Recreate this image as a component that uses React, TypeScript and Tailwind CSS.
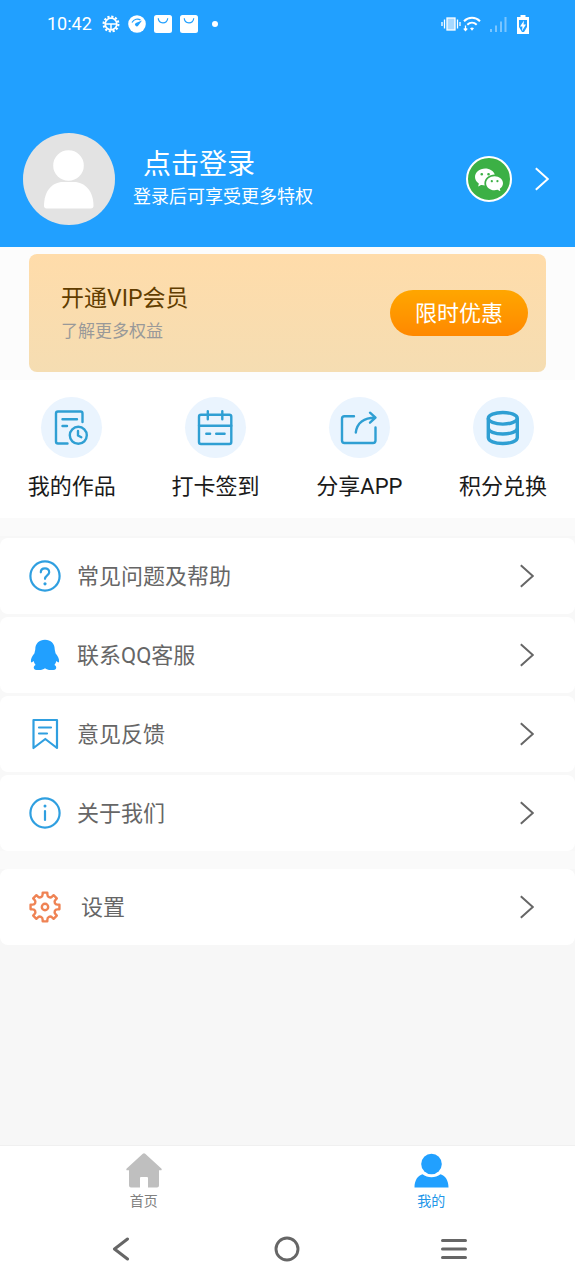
import type { ReactNode } from "react";
import { BsWechat } from "react-icons/bs";

const WorksIcon = () => (
  <svg viewBox="0 0 61 61" className="h-full w-full" fill="none" stroke="#2f9fd3" strokeWidth="2.4" strokeLinecap="round" strokeLinejoin="round">
    <path d="M41.500 25V16.500a2 2 0 0 0-2-2H17a2 2 0 0 0-2 2V44.500a2 2 0 0 0 2 2h9.500M21.500 22.300h14.500M21.500 29h4.500" />
    <circle cx="37.300" cy="38.300" r="8.500" />
    <path d="M37 34v4.500l3.300 1.700" />
  </svg>
);

const CalendarIcon = () => (
  <svg viewBox="0 0 61 61" className="h-full w-full" fill="none" stroke="#2f9fd3" strokeWidth="2.4" strokeLinecap="round" strokeLinejoin="round">
    <rect x="14" y="17.700" width="32.300" height="29.300" rx="2" />
    <path d="M14 28.700h32.300M22.800 14.300v8M37.300 14.300v8M21.300 36.700h3.800M31.200 36.700h8.400" />
  </svg>
);

const ShareIcon = () => (
  <svg viewBox="0 0 61 61" className="h-full w-full" fill="none" stroke="#2f9fd3" strokeWidth="2.4" strokeLinecap="round" strokeLinejoin="round">
    <path d="M25 19.300H15.500a2.500 2.500 0 0 0-2.500 2.500V43.500a2.500 2.500 0 0 0 2.500 2.500H44a2.500 2.500 0 0 0 2.500-2.500V30.500" />
    <path d="M26.800 35.500C28 26 35 20.700 46 20.700M41 15.700l5.500 5-5.500 5" />
  </svg>
);

const CoinsIcon = () => (
  <svg viewBox="0 0 61 61" className="h-full w-full" fill="none" stroke="#2f9fd3" strokeWidth="3.4">
    <ellipse cx="29.800" cy="21.300" rx="14.500" ry="5.800" />
    <path d="M15.300 21.300V40.500c0 3.600 6.500 6 14.500 6s14.500-2.400 14.500-6V21.300M15.300 31c0 3.600 6.500 6 14.500 6s14.500-2.400 14.500-6" />
  </svg>
);

const HelpIcon = () => (
  <svg viewBox="0 0 32 32" className="h-8 w-8" fill="none" stroke="#2f9fe0" strokeWidth="2.2" strokeLinecap="round">
    <circle cx="16" cy="16" r="14.600" />
    <path d="M11.800 12.300c0-2.400 1.800-4 4.200-4s4.200 1.600 4.200 3.900c0 3-4.200 3.200-4.200 6.600" />
    <circle cx="16" cy="23.800" r="1.600" fill="#2f9fe0" stroke="none" />
  </svg>
);

const PenguinIcon = () => (
  <svg viewBox="0 0 32 32" className="h-8 w-8" fill="#21a0ff">
    <path d="M16 .7C10.300.7 6.300 4.600 6.300 10c0 1.500-.6 2.500-.8 4.300C3.300 17 1.800 19.800 1.900 22.300c.1 1.600 1 1.500 2.700-.3.300 1.500 1 2.700 2 3.900-1.300.7-2 1.800-1.800 3 .2 1.700 2.300 2.300 5.400 2.200 2.600-.1 4.300-.7 5.800-1.800 1.500 1.100 3.200 1.700 5.800 1.800 3.100.1 5.200-.5 5.400-2.200.2-1.200-.5-2.300-1.800-3 1-1.200 1.700-2.400 2-3.900 1.700 1.800 2.600 1.900 2.700.3.100-2.500-1.400-5.300-3.600-8-.2-1.800-.8-2.800-.8-4.300C25.700 4.600 21.700.7 16 .7z" />
  </svg>
);

const FeedbackIcon = () => (
  <svg viewBox="0 0 32 32" className="h-8 w-8" fill="none" stroke="#2f9fe0" strokeWidth="2.2" strokeLinecap="round" strokeLinejoin="round">
    <path d="M4.500 2h23.500v28l-11.700-9-11.800 9zM10 9.500h12M10 15.500h8" />
  </svg>
);

const InfoIcon = () => (
  <svg viewBox="0 0 32 32" className="h-8 w-8" fill="none" stroke="#2f9fe0" strokeWidth="2.2" strokeLinecap="round">
    <circle cx="16" cy="16" r="14.600" />
    <path d="M16 14v9" />
    <circle cx="16" cy="9" r="1.500" fill="#2f9fe0" stroke="none" />
  </svg>
);

// eight teeth with a round valley between each pair
const gearPoint = (radius: number, deg: number) => {
  const a = (deg * Math.PI) / 180;
  return `${(16 + radius * Math.cos(a)).toFixed(2)} ${(16 + radius * Math.sin(a)).toFixed(2)}`;
};

const gearPath =
  [0, 45, 90, 135, 180, 225, 270, 315]
    .map(
      (deg, i) =>
        `${i === 0 ? "M" : "L"}${gearPoint(14.6, deg - 9)}L${gearPoint(14.6, deg + 9)}L${gearPoint(12.6, deg + 11)}A2.700 2.700 0 0 0 ${gearPoint(12.6, deg + 34)}`
    )
    .join("") + "Z";

const GearIcon = () => (
  <svg viewBox="0 0 32 32" className="h-8 w-8" fill="none" stroke="#ef8354" strokeWidth="2.4" strokeLinejoin="round">
    <path d={gearPath} />
    <circle cx="16" cy="16" r="3.200" />
  </svg>
);

const Chevron = () => (
  <svg viewBox="0 0 14 24" className="h-6 w-3.5 shrink-0" fill="none" stroke="currentColor" strokeWidth="2">
    <path d="M.8 1.300 12.800 12 .8 22.700" />
  </svg>
);

const shortcuts = [
  { name: "我的作品", icon: <WorksIcon /> },
  { name: "打卡签到", icon: <CalendarIcon /> },
  { name: "分享APP", icon: <ShareIcon /> },
  { name: "积分兑换", icon: <CoinsIcon /> },
];

const menuItems = [
  { name: "常见问题及帮助", icon: <HelpIcon /> },
  { name: "联系QQ客服", icon: <PenguinIcon /> },
  { name: "意见反馈", icon: <FeedbackIcon /> },
  { name: "关于我们", icon: <InfoIcon /> },
];

const StatusBar = () => (
  <div className="flex h-12 items-center justify-between pr-[46px] pl-[47px] text-white">
    <div className="flex items-center gap-2">
      <span className="mr-0.5 text-lg">10:42</span>
      <svg viewBox="0 0 18 18" className="h-[18px] w-[18px]" fill="none" stroke="currentColor">
        <circle cx="9" cy="9" r="7.400" strokeWidth="2.200" strokeDasharray="2.200 1.675" />
        <circle cx="9" cy="9" r="5.800" strokeWidth="1.700" />
        <path d="M3.500 9h11M9 9v5.500" strokeWidth="1.500" />
      </svg>
      <svg viewBox="0 0 18 18" className="h-[18px] w-[18px]">
        <circle cx="9" cy="9" r="8.800" fill="currentColor" />
        <path d="M4 7.500C6 4 10 3.200 12.500 5" fill="none" stroke="#21a0ff" strokeWidth="1.200" />
        <path d="M14 5.500 10.300 10.500A1.800 1.800 0 1 1 7.800 8z" fill="#21a0ff" />
      </svg>
      {[1, 2].map((n) => (
        <svg key={n} viewBox="0 0 18 18" className="h-[18px] w-[18px]">
          <rect width="18" height="18" rx="2.500" fill="currentColor" />
          <path d="M4.300 3.300c0 6 9.400 6 9.400 0" fill="none" stroke="#21a0ff" strokeWidth="1.200" />
        </svg>
      ))}
      <span className="ml-1.5 h-1.5 w-1.5 rounded-full bg-white" />
    </div>
    <div className="flex items-center">
      <svg viewBox="0 0 20 14" className="h-3.5 w-5" fill="none" stroke="currentColor" strokeWidth="1.300">
        <rect x="6" y="1" width="8" height="12" fill="#a6d8ff" />
        <path d="M3.500 2.500v9M1 5v4M16.500 2.500v9M19 5v4" />
      </svg>
      <svg viewBox="0 0 18 16" className="ml-0.5 h-4 w-[18px]" fill="none" stroke="currentColor" strokeWidth="2">
        <path d="M1 5.300C5.500.7 12.500.7 17 5.300M4.300 8.800c2.800-2.700 6.600-2.700 9.400 0" />
        <path d="M7 12.300c1.300-1 2.700-1 4 0L9 14.800z" fill="currentColor" stroke="none" />
        <path d="M2.500 9.500v5M.8 12.500l1.700 2 1.700-2" strokeWidth="1.300" />
      </svg>
      <svg viewBox="0 0 18 16" className="ml-2 h-4 w-[18px]" fill="#7ac5ff">
        <path d="M1 13h2v3H1zM6 9.500h2V16H6zM11 5.500h2V16h-2zM15.500 1h2v15h-2z" />
      </svg>
      <svg viewBox="0 0 12 19" className="ml-2.5 h-[19px] w-3">
        <path d="M3.500 0h5v2H12v17H0V2h3.500z" fill="currentColor" />
        <path d="M2 5h8v7l-3 5H5l-3-5z" fill="#21a0ff" />
        <path d="M7 5.500 3 11.500h2.500l-.5 4.500 4-6.500H6.500z" fill="currentColor" />
      </svg>
    </div>
  </div>
);

const MenuRow = ({ name, icon, wide = false }: { name: string; icon: ReactNode; wide?: boolean }) => (
  <button
    className={`flex h-[76px] w-full cursor-pointer items-center rounded-lg bg-white pr-[41px] pl-[29px] text-[#666] ${
      wide ? "gap-5" : "gap-4"
    }`}
  >
    {icon}
    <span className="flex-1 pt-0.5 text-left text-[22px] leading-8">{name}</span>
    <Chevron />
  </button>
);

const App = () => {
  return (
    <div className="flex min-h-screen w-full flex-col bg-[#f7f7f7] font-[Roboto,'Noto_Sans_CJK_SC',sans-serif]">
      <header className="bg-[#21a0ff] pb-[22px] text-white">
        <StatusBar />
        <div className="mt-[85px] flex items-center pr-[26px] pl-[23px]">
          <button className="flex flex-1 cursor-pointer items-center gap-[18px] text-left">
            <svg viewBox="0 0 92 92" className="h-[92px] w-[92px] shrink-0">
              <circle cx="46" cy="46" r="46" fill="#e3e3e3" />
              <circle cx="45.500" cy="32.500" r="15.300" fill="#fff" />
              <path d="M21 73c0-15 8-24 19-24h11c11 0 19.500 9 19.500 24 0 1.500-1 2.500-2.500 2.500H23.500c-1.500 0-2.500-1-2.500-2.500z" fill="#fff" />
            </svg>
            <span className="flex flex-col">
              <span className="pl-2.5 text-[28px] leading-9">点击登录</span>
              <span className="text-lg leading-7">登录后可享受更多特权</span>
            </span>
          </button>
          <button
            aria-label="微信登录"
            className="mr-[23px] flex h-[46px] w-[46px] cursor-pointer items-center justify-center rounded-full border-2 border-white bg-[#3cb045]"
          >
            <BsWechat className="h-7 w-7" />
          </button>
          <Chevron />
        </div>
      </header>

      <main className="flex-1">
        <section className="bg-[#fcfcfc] px-[29px] pt-[7px] pb-2">
          <div className="flex h-[118px] items-center justify-between rounded-lg bg-linear-to-b from-[#ffdcaa] to-[#f5ddb2] pr-[18px] pl-8">
            <div>
              <h2 className="text-[23px] leading-9 text-[#613d00]">开通VIP会员</h2>
              <p className="text-[17px] leading-7 text-[#999]">了解更多权益</p>
            </div>
            <button className="h-[46px] w-[138px] cursor-pointer rounded-full bg-linear-to-b from-[#ffa600] to-[#ff8800] text-[22px] text-white">
              限时优惠
            </button>
          </div>
        </section>

        <section className="grid h-[138px] grid-cols-4 bg-white pt-[17px]">
          {shortcuts.map((item) => (
            <button key={item.name} className="flex cursor-pointer flex-col items-center gap-[13px]">
              <span className="h-[61px] w-[61px] rounded-full bg-[#eaf4fe]">{item.icon}</span>
              <span className="text-[22px] leading-8 text-[#1a1a1a]">{item.name}</span>
            </button>
          ))}
        </section>

        <section className="bg-[#fafafa] py-[18px]">
          <div className="flex flex-col gap-[3px] border-t-2 border-[#f7f7f7] bg-[#f8f8f8]">
            {menuItems.map((item) => (
              <MenuRow key={item.name} name={item.name} icon={item.icon} />
            ))}
          </div>
        </section>
        <MenuRow name="设置" icon={<GearIcon />} wide />
      </main>

      <footer className="bg-white">
        <nav className="grid h-[75px] grid-cols-2 border-t border-[#f0f0f0] text-sm leading-5">
          <a href="#home" className="flex flex-col items-center gap-[3px] pt-[7px] text-[#808080]">
            <svg viewBox="0 0 36 35" className="h-[35px] w-9" fill="#bfbfbf">
              <path d="M16.800.8a1.800 1.800 0 0 1 2.400 0L35.300 15.500c.8.800.4 1.800-.6 1.800H33V32.500a2 2 0 0 1-2 2H22V25a1 1 0 0 0-1-1h-6a1 1 0 0 0-1 1v9.500H5a2 2 0 0 1-2-2V17.300H1.300C.3 17.300-.1 16.300.700 15.500z" />
            </svg>
            首页
          </a>
          <a href="#mine" className="flex flex-col items-center gap-[3px] pt-[7px] text-[#2196e8]">
            <svg viewBox="0 0 36 35" className="h-[35px] w-9" fill="#21a0ff">
              <circle cx="18.500" cy="11" r="10.300" />
              <path d="M1.500 34.500c0-7 3-11.500 8-13.200 5 4 13 4 18 0C32.500 23 35.500 27.500 35.500 34.500z" />
            </svg>
            我的
          </a>
        </nav>
        <div className="grid h-[60px] grid-cols-3 items-center justify-items-center px-[38px] pb-0.5 text-[#666]">
          <button aria-label="返回" className="cursor-pointer">
            <svg viewBox="0 0 24 24" className="h-6 w-6" fill="none" stroke="currentColor" strokeWidth="3" strokeLinecap="round" strokeLinejoin="round">
              <path d="M18.500 2 5.500 12l13 10" />
            </svg>
          </button>
          <button aria-label="主屏幕" className="cursor-pointer">
            <svg viewBox="0 0 26 26" className="h-[26px] w-[26px]" fill="none" stroke="currentColor" strokeWidth="2.900">
              <circle cx="13" cy="13" r="11" />
            </svg>
          </button>
          <button aria-label="最近任务" className="cursor-pointer">
            <svg viewBox="0 0 26 24" className="h-6 w-[26px]" fill="none" stroke="currentColor" strokeWidth="3" strokeLinecap="round">
              <path d="M1.500 3.500h23M1.500 12h23M1.500 20.500h23" />
            </svg>
          </button>
        </div>
      </footer>
    </div>
  );
};

export default App;
